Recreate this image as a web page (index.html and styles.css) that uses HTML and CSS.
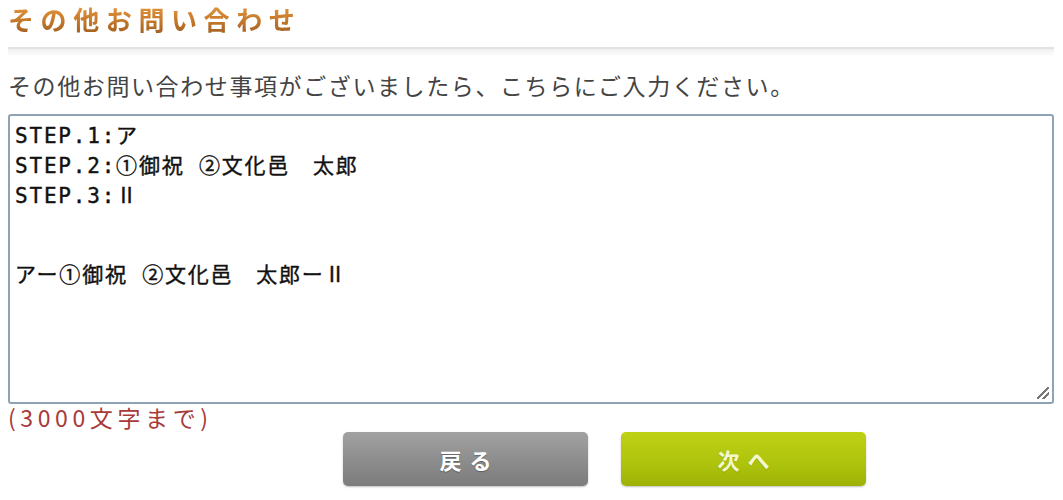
FILE: index.html
```html
<!DOCTYPE html>
<html lang="ja">
<head>
<meta charset="utf-8">
<link rel="stylesheet" href="styles.css">
</head>
<body>
<div class="page">
  <h2 class="title">その他お問い合わせ</h2>
  <div class="divider"></div>
  <p class="lead">その他お問い合わせ事項がございましたら、こちらにご入力ください。</p>
  <div class="textbox">
    <div class="line">STEP.1:ア</div>
    <div class="line">STEP.2:①御祝 ②文化邑　太郎</div>
    <div class="line">STEP.3:Ⅱ</div>
    <div class="blank"></div>
    <div class="line">アー①御祝 ②文化邑　太郎ーⅡ</div>
    <span class="grip"></span>
  </div>
  <p class="note">(3000文字まで)</p>
  <div class="buttons">
    <button class="btn btn-back">戻る</button>
    <button class="btn btn-next">次へ</button>
  </div>
</div>
</body>
</html>
```

FILE: styles.css
```css
* { box-sizing: border-box; }
html, body { margin: 0; padding: 0; background: #fff; }
body {
  font-family: "Noto Sans CJK JP", "Noto Sans", sans-serif;
  width: 1063px;
  height: 500px;
  overflow: hidden;
}
.page { padding: 0 9px 0 8px; }
.title {
  margin: 1px 0 0 0;
  font-size: 26px;
  line-height: 36px;
  letter-spacing: 6.6px;
  font-weight: 700;
  background: linear-gradient(180deg, #eaa045 0%, #c97c2c 50%, #9a5a1e 100%);
  -webkit-background-clip: text;
  background-clip: text;
  color: transparent;
  display: inline-block;
}
.divider {
  margin-top: 10px;
  height: 10px;
  border-top: 2px solid #e2e2e2;
  background: linear-gradient(180deg, #f0f0f0 0%, #ffffff 100%);
}
.lead {
  margin: 13px 0 0 0;
  font-size: 23px;
  line-height: 30px;
  color: #444;
  letter-spacing: 1.6px;
}
.textbox {
  position: relative;
  margin-top: 14px;
  height: 290px;
  border: 2px solid #8fa3b6;
  border-radius: 3px;
  padding: 5px 5px;
  font-family: "DejaVu Sans Mono", "Noto Sans CJK JP", monospace;
  font-size: 21px;
  line-height: 30px;
  letter-spacing: 1.8px;
  color: #111;
  font-weight: 400;
  -webkit-text-stroke: 0.4px #111;
  background: #fff;
}
.line { white-space: pre; }
.blank { height: 49px; }
.grip {
  position: absolute;
  right: 3px;
  bottom: 3px;
  width: 12px;
  height: 12px;
  background: linear-gradient(135deg, transparent 45%, #777 45%, #777 55%, transparent 55%, transparent 70%, #777 70%, #777 80%, transparent 80%);
}
.note {
  margin: 0;
  font-size: 23px;
  line-height: 26px;
  color: #a83a3a;
  letter-spacing: 4.6px;
}
.buttons {
  display: flex;
  gap: 33px;
  margin-top: 2px;
  padding-left: 335px;
}
.btn {
  width: 245px;
  height: 54px;
  border: none;
  border-radius: 5px;
  color: #fff;
  font-family: "Noto Sans CJK JP", sans-serif;
  font-size: 22px;
  font-weight: 700;
  letter-spacing: 8px;
  text-indent: 8px;
  box-shadow: 0 1px 2px rgba(0,0,0,0.25);
}
.btn-back {
  background: linear-gradient(180deg, #a2a2a2 0%, #8a8a8a 60%, #7c7c7c 100%);
  text-shadow: 0 1px 1px rgba(0,0,0,0.3);
}
.btn-next {
  background: linear-gradient(180deg, #bfd114 0%, #adc30c 60%, #9db205 100%);
  color: #f4f8d0;
  text-shadow: 0 1px 1px rgba(0,0,0,0.15);
}
```
